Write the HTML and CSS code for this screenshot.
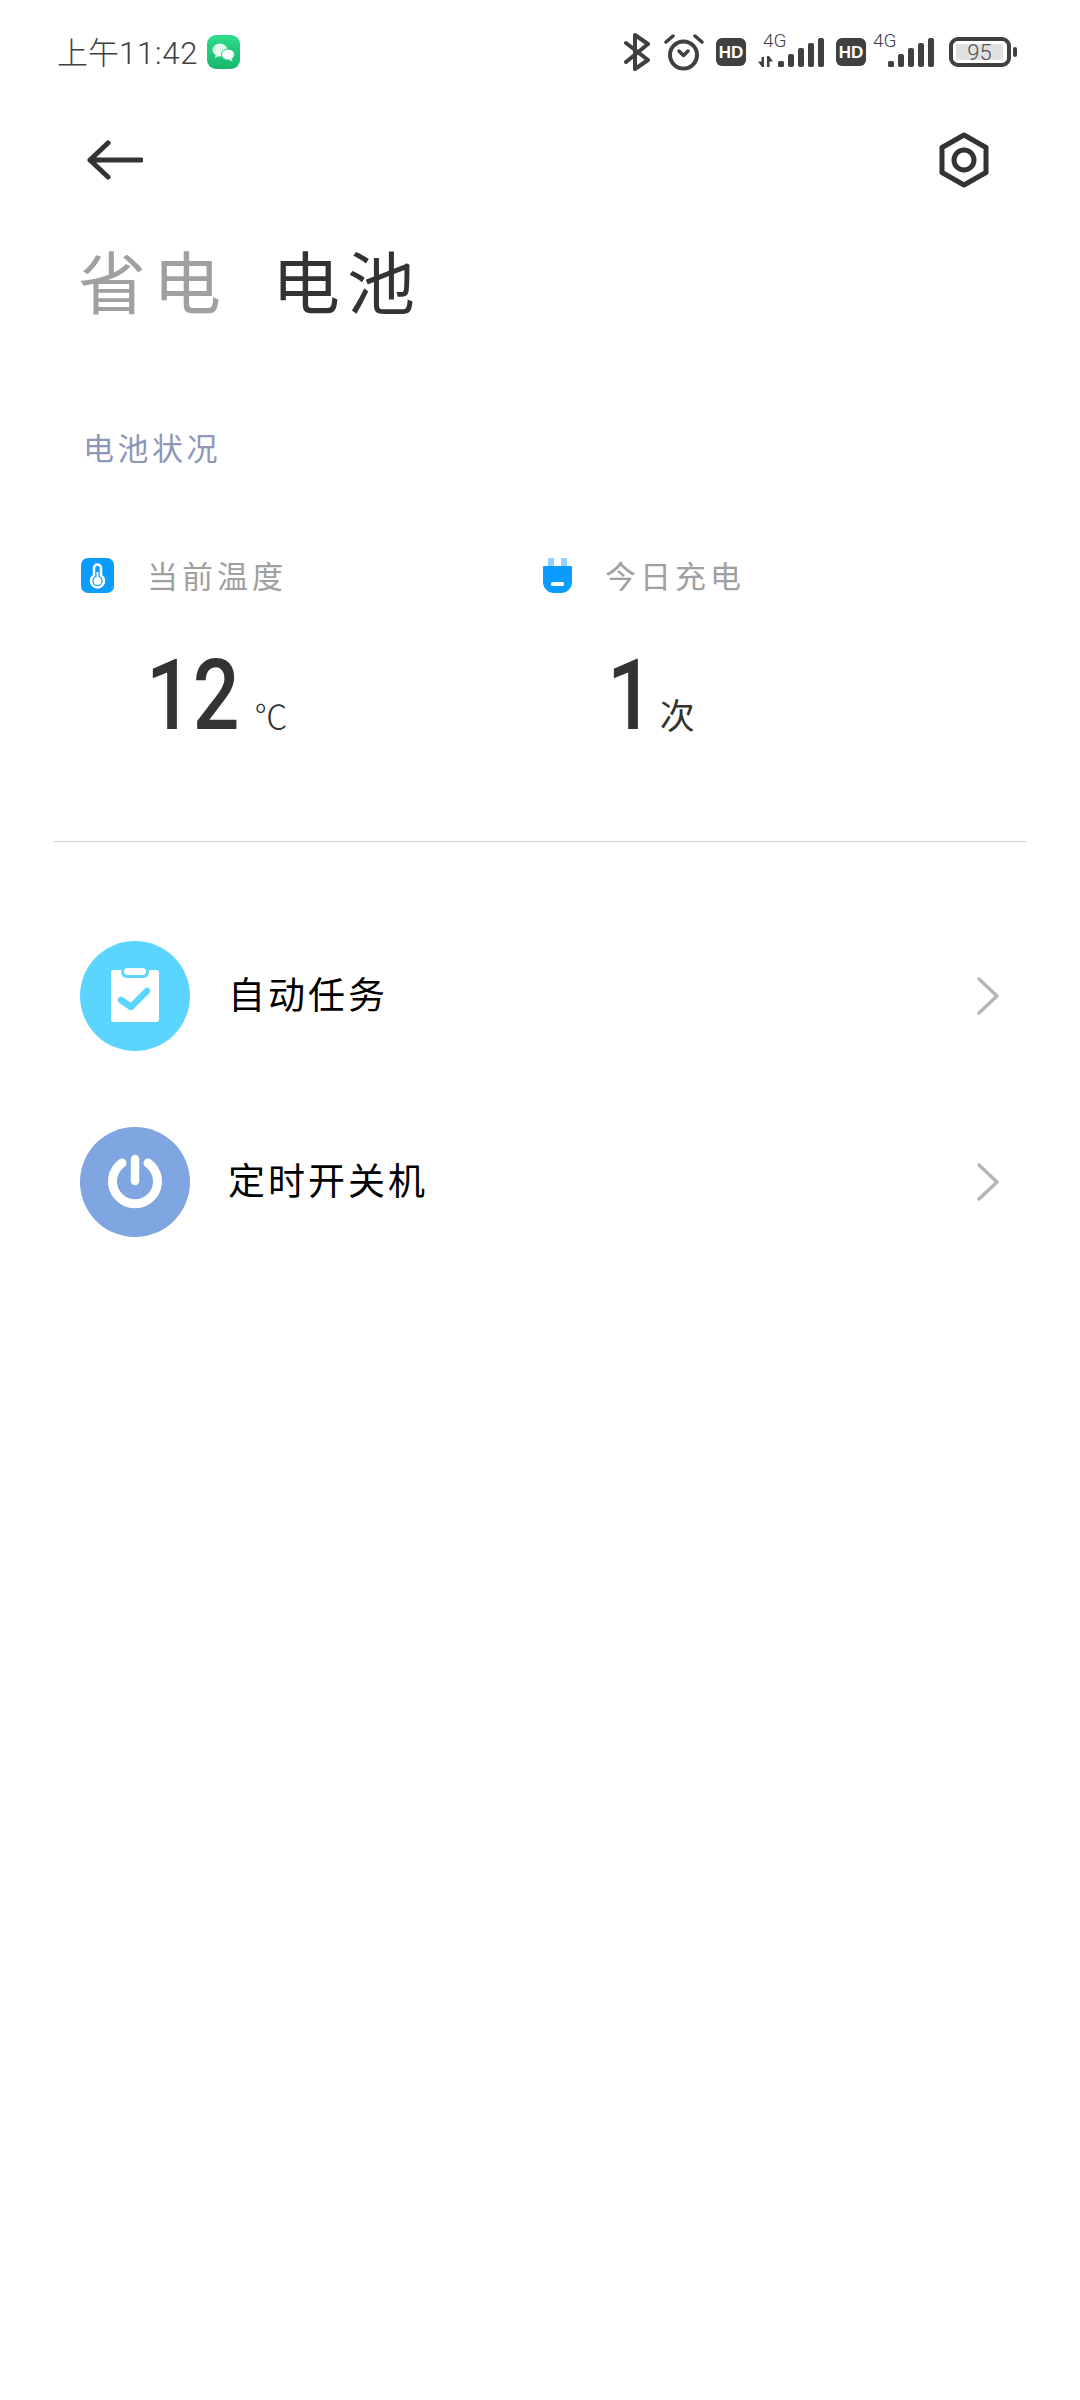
FILE: index.html
```html
<!DOCTYPE html>
<html lang="zh-CN">
<head>
    <meta charset="UTF-8">
    <meta name="viewport" content="width=device-width, initial-scale=1.0">
    <title>省电 电池</title>
    <link rel="stylesheet" href="styles.css">
</head>
<body>
    <div class="status-bar">
        <div class="status-left">
            <span class="time"><span class="time-cn">上午</span>11:42</span>
            <svg class="wechat" width="33" height="34" viewBox="0 0 33 34">
                <defs>
                    <linearGradient id="wechat-bg" x1="0" y1="0" x2="0" y2="1">
                        <stop offset="0" stop-color="#2edc8c"/>
                        <stop offset="1" stop-color="#17b86a"/>
                    </linearGradient>
                </defs>
                <rect width="33" height="34" rx="9" fill="url(#wechat-bg)"/>
                <ellipse cx="13" cy="15" rx="7.5" ry="6.5" fill="#e3f9ee"/>
                <path d="M9 19l-1 4 4-2z" fill="#e3f9ee"/>
                <ellipse cx="21" cy="19.5" rx="6.5" ry="5.5" fill="#fff" stroke="#20c878" stroke-width="1"/>
                <path d="M24 23.5l2 3-4-1.5z" fill="#fff"/>
            </svg>
        </div>
        <div class="status-right">
            <svg width="26" height="38" viewBox="0 0 26 38">
                <path d="M2 10L24 27L11 36V2L24 11L2 29" fill="none" stroke="#404040" stroke-width="4" stroke-linecap="round" stroke-linejoin="round"/>
            </svg>
            <svg class="alarm" width="40" height="38" viewBox="0 0 40 38">
                <circle cx="19.5" cy="22" r="13.5" fill="none" stroke="#404040" stroke-width="4"/>
                <path d="M2 9L9 3M31 3L38 9M15 18L19.5 22.5L24 18" fill="none" stroke="#404040" stroke-width="3.5" stroke-linecap="round" stroke-linejoin="round"/>
            </svg>
            <svg width="30" height="28" viewBox="0 0 30 28">
                <rect width="30" height="28" rx="6" fill="#404040"/>
                <text class="hd-text" x="15" y="20" text-anchor="middle">HD</text>
            </svg>
            <svg class="net" width="66" height="44" viewBox="0 -10 66 44">
                <text class="net-text" x="5" y="14">4G</text>
                <path d="M0 28.5L3.5 28.5V24H6V34H4L0 28.5z" fill="#404040"/>
                <path d="M15 28.5L11.5 28.5V34H9V23H11L15 28.5z" fill="#404040"/>
                <rect x="20" y="28" width="6" height="6" rx="1.5" fill="#404040"/>
                <rect x="30" y="21" width="6" height="13" rx="2" fill="#404040"/>
                <rect x="40" y="15" width="6" height="19" rx="2" fill="#404040"/>
                <rect x="50" y="10" width="6" height="24" rx="2" fill="#404040"/>
                <rect x="60" y="5" width="6" height="29" rx="2" fill="#404040"/>
            </svg>
            <svg width="30" height="28" viewBox="0 0 30 28">
                <rect width="30" height="28" rx="6" fill="#404040"/>
                <text class="hd-text" x="15" y="20" text-anchor="middle">HD</text>
            </svg>
            <svg class="net net-tight" width="61" height="44" viewBox="0 -10 61 44">
                <text class="net-text" x="0" y="14">4G</text>
                <rect x="15" y="28" width="6" height="6" rx="1.5" fill="#404040"/>
                <rect x="25" y="21" width="6" height="13" rx="2" fill="#404040"/>
                <rect x="35" y="15" width="6" height="19" rx="2" fill="#404040"/>
                <rect x="45" y="10" width="6" height="24" rx="2" fill="#404040"/>
                <rect x="55" y="5" width="6" height="29" rx="2" fill="#404040"/>
            </svg>
            <svg class="battery" width="68" height="30" viewBox="0 0 68 30">
                <rect x="2" y="2" width="58" height="26" rx="7" fill="none" stroke="#404040" stroke-width="4"/>
                <rect x="7" y="7" width="47" height="16" rx="1" fill="#e2e2e2"/>
                <text class="battery-text" x="30.5" y="22.5" text-anchor="middle">95</text>
                <rect x="64" y="10" width="4" height="10" rx="2" fill="#404040"/>
            </svg>
        </div>
    </div>

    <div class="toolbar">
        <svg width="56" height="40" viewBox="0 0 56 40">
            <path d="M54 20H3M21 3L3 20L21 37" fill="none" stroke="#333" stroke-width="5" stroke-linecap="round" stroke-linejoin="round"/>
        </svg>
        <svg width="52" height="56" viewBox="0 0 52 56">
            <path d="M26 3L48 15.5V40.5L26 53L4 40.5V15.5z" fill="none" stroke="#333" stroke-width="5" stroke-linejoin="round"/>
            <circle cx="26" cy="28" r="10" fill="none" stroke="#333" stroke-width="5"/>
        </svg>
    </div>

    <div class="tabs">
        <span class="tab">省电</span>
        <span class="tab tab-active">电池</span>
    </div>

    <div class="section-label">电池状况</div>

    <div class="stats">
        <div class="stat">
            <div class="stat-head">
                <svg class="stat-icon" width="33" height="35" viewBox="0 0 33 35">
                    <rect width="33" height="35" rx="7" fill="#0a9cff"/>
                    <path d="M13 10a3.5 3.5 0 0 1 7 0V17.5a6.5 6.5 0 1 1-7 0z" fill="#0a9cff" stroke="#fff" stroke-width="2.5"/>
                    <circle cx="16.5" cy="23" r="4" fill="#fff"/>
                    <rect x="15.5" y="14" width="2" height="6" fill="#fff"/>
                </svg>
                <span class="stat-label">当前温度</span>
            </div>
            <div class="stat-value"><span class="num">12</span><span class="unit unit-temp">℃</span></div>
        </div>
        <div class="stat stat-charge">
            <div class="stat-head">
                <svg class="stat-icon" width="29" height="35" viewBox="0 0 29 35">
                    <rect x="5" y="0" width="6" height="10" fill="#8fd2ff"/>
                    <rect x="18" y="0" width="6" height="10" fill="#8fd2ff"/>
                    <path d="M0 9a1 1 0 0 1 1-1H28a1 1 0 0 1 1 1V24a11 11 0 0 1-11 11H11a11 11 0 0 1-11-11z" fill="#0a9cff"/>
                    <rect x="8" y="24" width="13" height="4" rx="1.5" fill="#fff"/>
                </svg>
                <span class="stat-label">今日充电</span>
            </div>
            <div class="stat-value"><span class="num">1</span><span class="unit">次</span></div>
        </div>
    </div>

    <div class="divider"></div>

    <div class="menu">
        <div class="menu-row">
            <svg class="menu-icon" width="110" height="110" viewBox="0 0 110 110">
                <circle cx="55" cy="55" r="55" fill="#5bd5ff"/>
                <path d="M34 29H76a3 3 0 0 1 3 3V78a3 3 0 0 1-3 3H34a3 3 0 0 1-3-3V32a3 3 0 0 1 3-3z" fill="#fff"/>
                <rect x="41" y="25" width="28" height="12" rx="6" fill="#5bd5ff"/>
                <rect x="44" y="27" width="22" height="7" rx="3.5" fill="#fff"/>
                <path d="M41 59L51 66L67 50" fill="none" stroke="#5bd5ff" stroke-width="6.5" stroke-linecap="round" stroke-linejoin="round"/>
            </svg>
            <span class="menu-text">自动任务</span>
            <svg width="22" height="38" viewBox="0 0 22 38">
                <path d="M2 2L20 19L2 36" fill="none" stroke="#b5b5b5" stroke-width="3.5" stroke-linecap="round" stroke-linejoin="round"/>
            </svg>
        </div>
        <div class="menu-row">
            <svg class="menu-icon" width="110" height="110" viewBox="0 0 110 110">
                <circle cx="55" cy="55" r="55" fill="#7fa6e0"/>
                <path d="M42 36A22.5 22.5 0 1 0 68 36" fill="none" stroke="#fff" stroke-width="9" stroke-linecap="round"/>
                <path d="M55 32V54" fill="none" stroke="#fff" stroke-width="8.5" stroke-linecap="round"/>
            </svg>
            <span class="menu-text">定时开关机</span>
            <svg width="22" height="38" viewBox="0 0 22 38">
                <path d="M2 2L20 19L2 36" fill="none" stroke="#b5b5b5" stroke-width="3.5" stroke-linecap="round" stroke-linejoin="round"/>
            </svg>
        </div>
    </div>
</body>
</html>
```

FILE: styles.css
```css
:root {
    --text: #333333;
    --muted: #a0a0a0;
    --label: #8e97b8;
    --cjk: "Noto Sans CJK SC", sans-serif;
}

body {
    margin: 0;
    background-color: #ffffff;
    color: var(--text);
    font-family: Roboto, "Noto Sans CJK SC", sans-serif;
}

svg {
    display: block;
    flex: none;
}

.status-bar {
    height: 104px;
    display: flex;
    align-items: center;
    justify-content: space-between;
    padding: 0 63px 0 57px;
}

.status-left {
    display: flex;
    align-items: center;
    gap: 9px;
}

.time {
    font-size: 31px;
    font-weight: 300;
    line-height: 36px;
    letter-spacing: 0.8px;
    color: #404040;
}

.time-cn {
    font-family: var(--cjk);
    font-size: 31px;
    letter-spacing: 0;
}

.status-right {
    display: flex;
    align-items: center;
    gap: 12px;
}

.alarm {
    margin-left: 2px;
}

/* these two carry extra room above the 4G label */
.net {
    margin-bottom: 14px;
}

.net-tight {
    margin-left: -5px;
}

.battery {
    margin-left: 3px;
}

.hd-text {
    font-family: "Liberation Sans", sans-serif;
    font-size: 17px;
    font-weight: 700;
    fill: #ffffff;
}

.net-text {
    font-family: Roboto, sans-serif;
    font-size: 19px;
    font-weight: 300;
    fill: #404040;
}

.battery-text {
    font-family: Roboto, sans-serif;
    font-size: 22px;
    font-weight: 300;
    fill: #505050;
}

.toolbar {
    height: 112px;
    display: flex;
    align-items: center;
    justify-content: space-between;
    padding: 0 90px 0 87px;
}

.tabs {
    margin-top: 19px;
    padding-left: 78px;
    display: flex;
    gap: 44px;
}

.tab {
    font-family: var(--cjk);
    font-size: 68px;
    line-height: 90px;
    letter-spacing: 7px;
    color: #a0a0a0;
}

.tab-active {
    color: var(--text);
}

.section-label {
    margin-top: 97px;
    padding-left: 83px;
    font-family: var(--cjk);
    font-size: 31px;
    line-height: 50px;
    letter-spacing: 3.5px;
    color: var(--label);
}

.stats {
    margin-top: 78px;
    padding-left: 81px;
    display: grid;
    grid-template-columns: 462px 1fr;
}

.stat-head {
    height: 50px;
    display: flex;
    align-items: center;
}

.stat-icon {
    margin-right: 33px;
}

.stat-label {
    font-family: var(--cjk);
    font-size: 31px;
    line-height: 50px;
    letter-spacing: 4px;
    color: var(--muted);
}

.stat-value {
    margin-top: 41px;
    padding-left: 65px;
    display: flex;
    align-items: baseline;
    gap: 14px;
    line-height: 110px;
}

.stat-charge .stat-value {
    padding-left: 64px;
}

/* the reference digits are narrower than Roboto */
.num {
    font-size: 98px;
    font-weight: 500;
    color: var(--text);
    transform: scaleX(0.84);
    transform-origin: left center;
    margin-right: -17px;
}

.unit {
    font-family: var(--cjk);
    font-size: 35px;
    line-height: 40px;
    color: var(--text);
}

.unit-temp {
    font-size: 33px;
    font-weight: 300;
}

.divider {
    height: 1px;
    margin: 90px 54px 0;
    background-color: #d0d0d0;
}

.menu {
    margin-top: 99px;
    padding: 0 81px 0 80px;
    display: flex;
    flex-direction: column;
    gap: 76px;
}

.menu-row {
    height: 110px;
    display: flex;
    align-items: center;
}

.menu-icon {
    margin-right: 38px;
}

.menu-text {
    flex: 1;
    padding-bottom: 6px;
    font-family: var(--cjk);
    font-size: 37px;
    line-height: 50px;
    letter-spacing: 3px;
    color: #000000;
}
```
